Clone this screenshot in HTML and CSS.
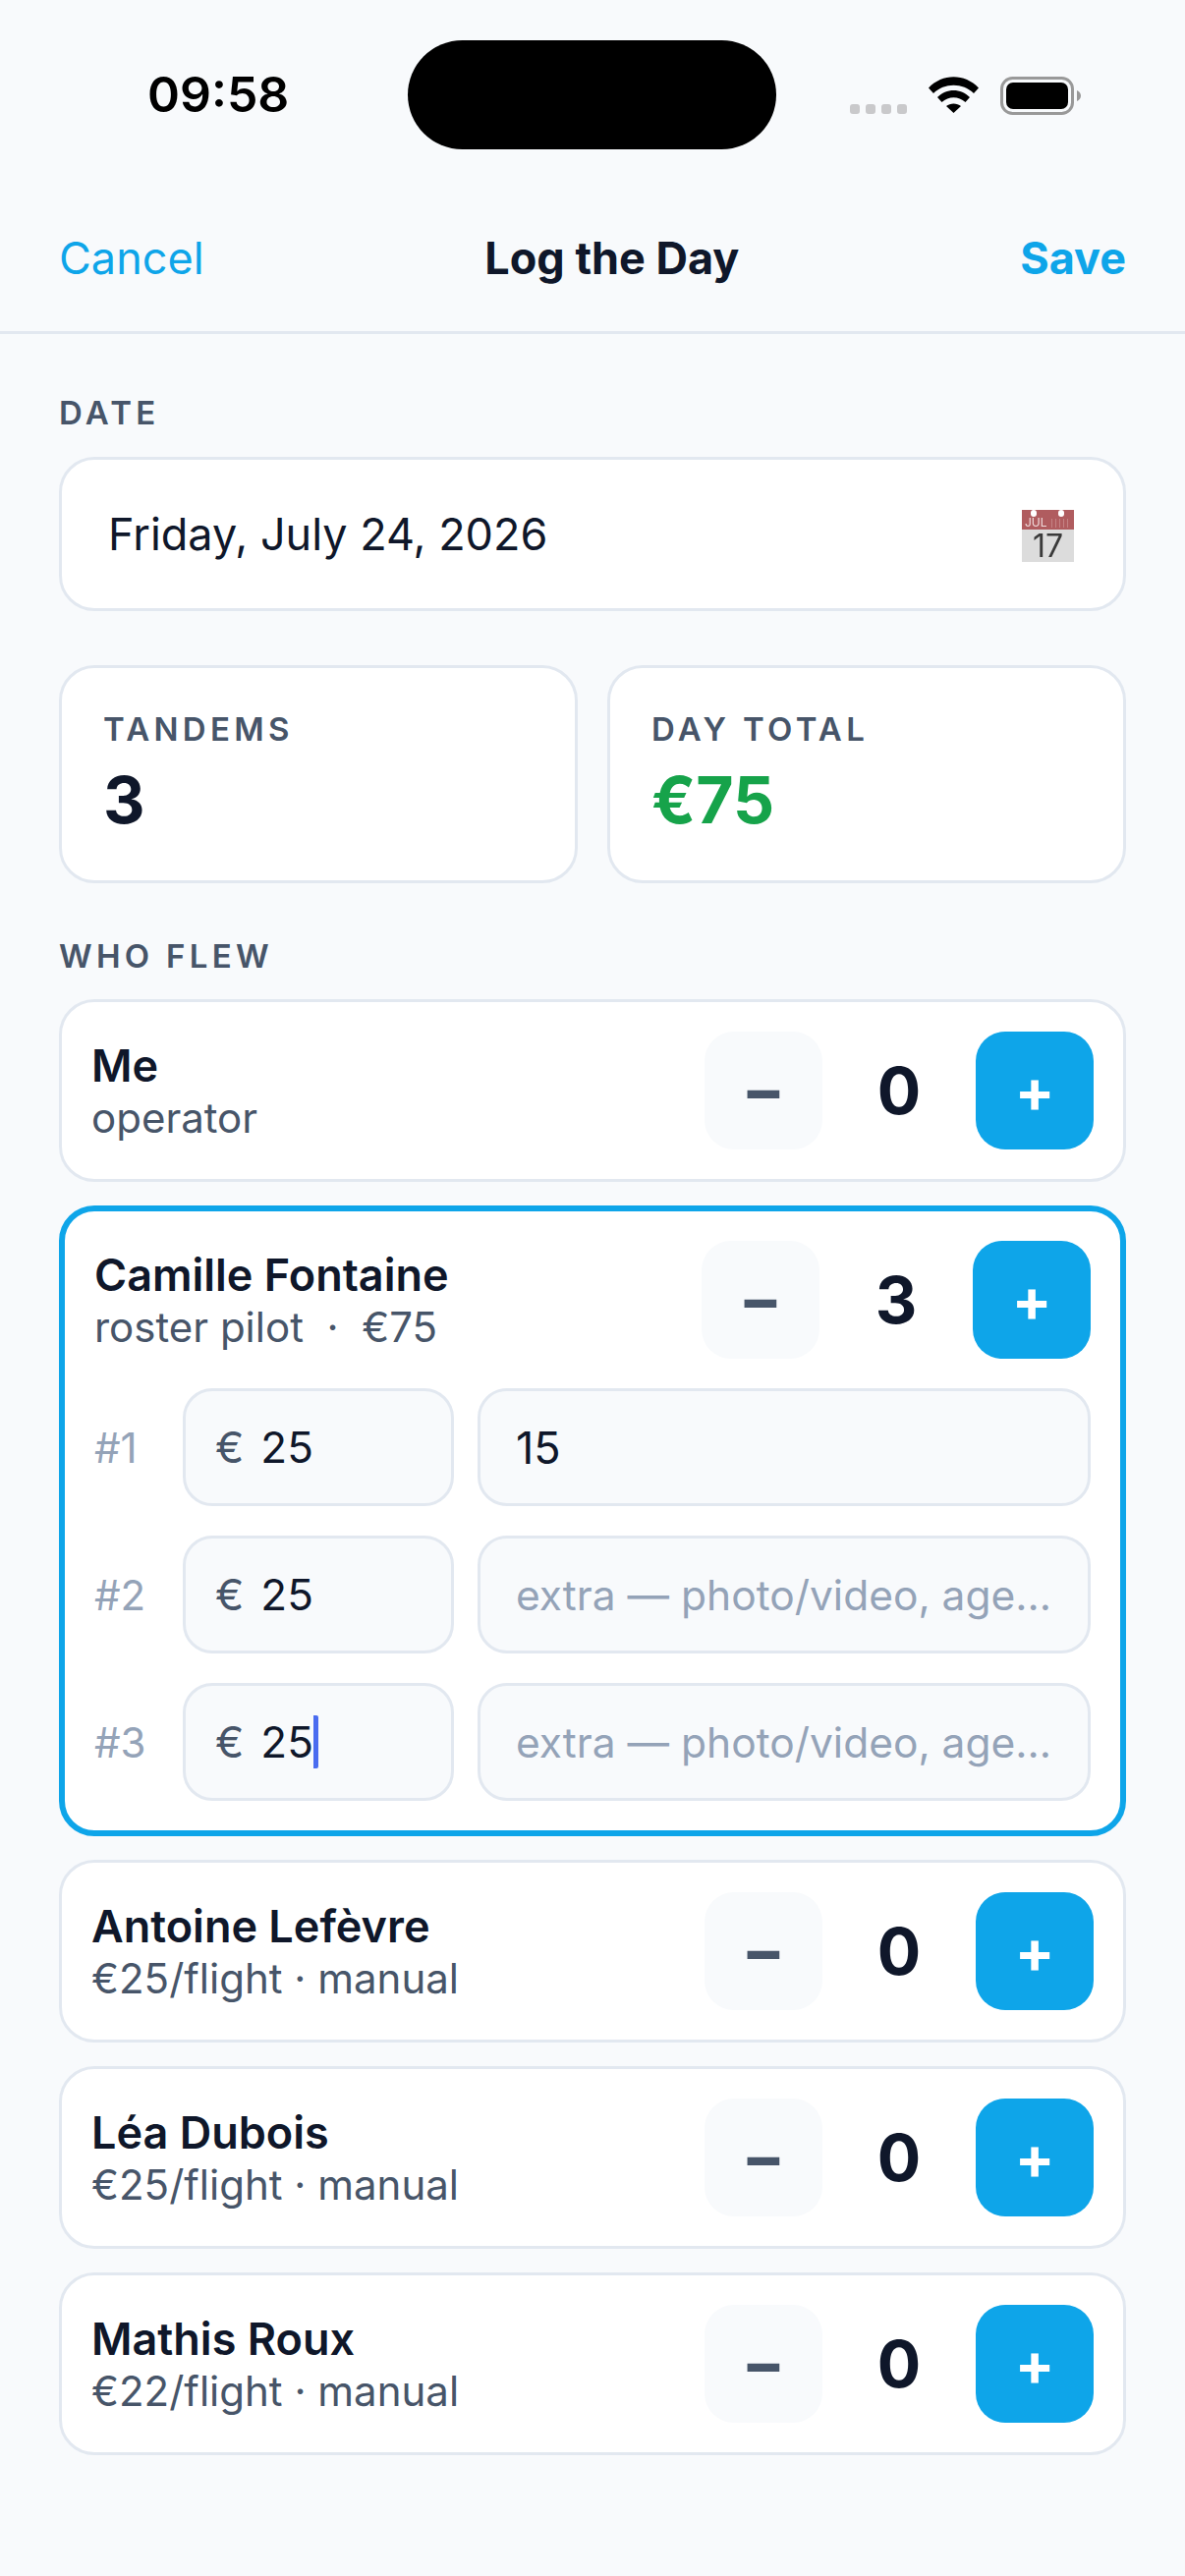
FILE: index.html
```html
<!DOCTYPE html>
<html lang="en">
<head>
    <title>Log the Day</title>
    <link rel="stylesheet" href="styles.css">
</head>
<body>
    <div class="status-bar">
        <div class="status-time">09:58</div>
        <div class="island"></div>
        <div class="status-icons">
            <div class="signal"><span></span><span></span><span></span><span></span></div>
            <svg class="wifi" width="51" height="37" viewBox="0 0 51 37">
                <path d="M0 11.5C14 -3.5 37 -3.5 51 11.5L46 17C35 6 16 6 5 17Z"/>
                <path d="M9 21C18 11.5 33 11.5 42 21L37.5 26C30.500 19.500 20.500 19.500 13.500 26Z"/>
                <path d="M18 30C22 26.500 29 26.500 33 30L25.500 37Z"/>
            </svg>
            <svg class="battery" width="82" height="39" viewBox="0 0 82 39">
                <rect x="1.500" y="1.500" width="72" height="36" rx="11" fill="none" stroke="#999" stroke-width="3"/>
                <rect x="6" y="6" width="63" height="27" rx="7"/>
                <path d="M78 14C80.500 15 82 17 82 19.500C82 22 80.500 24 78 25Z" fill="#999"/>
            </svg>
        </div>
    </div>

    <div class="nav">
        <div class="nav-cancel">Cancel</div>
        <div class="nav-title">Log the Day</div>
        <div class="nav-save">Save</div>
    </div>

    <div class="content">
        <div class="section-label date-label">DATE</div>
        <div class="date-field">
            <div>Friday, July 24, 2026</div>
            <div class="cal">
                <div class="cal-top"><span>JUL</span><i class="cal-lines"></i></div>
                <div class="cal-day">17</div>
            </div>
        </div>

        <div class="stats">
            <div class="stat">
                <div class="section-label">TANDEMS</div>
                <div class="stat-value">3</div>
            </div>
            <div class="stat">
                <div class="section-label">DAY TOTAL</div>
                <div class="stat-value green">€75</div>
            </div>
        </div>

        <div class="section-label who-label">WHO FLEW</div>
        <div class="pilots">
            <div class="pilot">
                <div class="pilot-top">
                    <div class="pilot-info">
                        <div class="pilot-name">Me</div>
                        <div class="pilot-sub">operator</div>
                    </div>
                    <div class="stepper">
                        <div class="btn-minus">−</div>
                        <div class="count">0</div>
                        <div class="btn-plus">+</div>
                    </div>
                </div>
            </div>

            <div class="pilot active">
                <div class="pilot-top">
                    <div class="pilot-info">
                        <div class="pilot-name">Camille Fontaine</div>
                        <div class="pilot-sub">roster pilot &nbsp;·&nbsp; €75</div>
                    </div>
                    <div class="stepper">
                        <div class="btn-minus">−</div>
                        <div class="count">3</div>
                        <div class="btn-plus">+</div>
                    </div>
                </div>
                <div class="flight-row">
                    <div class="flight-num">#1</div>
                    <div class="field amount"><span class="euro">€</span><span>25</span></div>
                    <div class="field extra">15</div>
                </div>
                <div class="flight-row">
                    <div class="flight-num">#2</div>
                    <div class="field amount"><span class="euro">€</span><span>25</span></div>
                    <div class="field extra placeholder">extra — photo/video, age...</div>
                </div>
                <div class="flight-row">
                    <div class="flight-num">#3</div>
                    <div class="field amount"><span class="euro">€</span><span class="caret">25</span></div>
                    <div class="field extra placeholder">extra — photo/video, age...</div>
                </div>
            </div>

            <div class="pilot">
                <div class="pilot-top">
                    <div class="pilot-info">
                        <div class="pilot-name">Antoine Lefèvre</div>
                        <div class="pilot-sub">€25/flight · manual</div>
                    </div>
                    <div class="stepper">
                        <div class="btn-minus">−</div>
                        <div class="count">0</div>
                        <div class="btn-plus">+</div>
                    </div>
                </div>
            </div>

            <div class="pilot">
                <div class="pilot-top">
                    <div class="pilot-info">
                        <div class="pilot-name">Léa Dubois</div>
                        <div class="pilot-sub">€25/flight · manual</div>
                    </div>
                    <div class="stepper">
                        <div class="btn-minus">−</div>
                        <div class="count">0</div>
                        <div class="btn-plus">+</div>
                    </div>
                </div>
            </div>

            <div class="pilot">
                <div class="pilot-top">
                    <div class="pilot-info">
                        <div class="pilot-name">Mathis Roux</div>
                        <div class="pilot-sub">€22/flight · manual</div>
                    </div>
                    <div class="stepper">
                        <div class="btn-minus">−</div>
                        <div class="count">0</div>
                        <div class="btn-plus">+</div>
                    </div>
                </div>
            </div>
        </div>
    </div>
</body>
</html>
```

FILE: styles.css
```css
* {
    box-sizing: border-box;
}

html, body {
    margin: 0;
    background-color: #f8fafc;
}

body {
    font-family: Inter, "Liberation Sans", sans-serif;
    color: #0f172a;
    min-height: 2622px;
}

/* status bar */
.status-bar {
    display: flex;
    height: 152px;
    padding-top: 41px;
}

.status-time {
    width: 415px;
    padding-left: 150px;
    font-size: 50px;
    font-weight: 600;
    line-height: 111px;
    color: #000;
}

.island {
    width: 375px;
    height: 111px;
    background-color: #000;
    border-radius: 56px;
}

.status-icons {
    display: flex;
    align-items: flex-start;
    padding: 37px 0 0 75px;
}

.signal {
    display: flex;
    gap: 6px;
    margin-top: 28px;
    margin-right: 22px;
}

.signal span {
    width: 10px;
    height: 10px;
    border-radius: 3px;
    background-color: #c9c9cb;
}

.wifi {
    margin-right: 22px;
}

/* nav */
.nav {
    display: flex;
    justify-content: space-between;
    align-items: center;
    height: 188px;
    padding: 36px 60px 0;
    border-bottom: 3px solid #e2e8f0;
    font-size: 45px;
}

.nav-cancel {
    color: #0ea5e9;
}

.nav-title {
    font-weight: 700;
}

.nav-save {
    color: #0ea5e9;
    font-weight: 700;
}

.content {
    padding: 0 60px;
}

.section-label {
    font-size: 33px;
    font-weight: 600;
    letter-spacing: 0.13em;
    color: #475569;
    line-height: 40px;
}

.date-label {
    margin-top: 60px;
    margin-bottom: 25px;
}

.date-field {
    display: flex;
    justify-content: space-between;
    align-items: center;
    height: 157px;
    padding: 0 50px 0 47px;
    background-color: #fff;
    border: 3px solid #e2e8f0;
    border-radius: 36px;
    font-size: 45px;
}

/* calendar emoji */
.cal {
    position: relative;
    width: 53px;
    height: 53px;
    margin-top: 3px;
    background-color: #dcdcdc;
    filter: blur(0.4px);
}

.cal::before, .cal::after {
    content: "";
    position: absolute;
    top: 0;
    width: 6px;
    height: 7px;
    border-radius: 3px;
    background-color: #fff;
}

.cal::before {
    left: 9px;
}

.cal::after {
    left: 37px;
}

.cal-top {
    display: flex;
    justify-content: space-between;
    align-items: flex-end;
    height: 20px;
    padding: 0 3px 1px;
    background-color: #b05c5f;
    font-size: 12px;
    line-height: 12px;
    color: #f0dcdc;
}

.cal-lines {
    width: 20px;
    height: 9px;
    margin-bottom: 1px;
    background: repeating-linear-gradient(90deg, #d9a9aa 0 1px, transparent 1px 4px);
    opacity: 0.5;
}

.cal-day {
    height: 33px;
    font-size: 32px;
    line-height: 33px;
    text-align: center;
    color: #3a3a3a;
}

.stats {
    display: flex;
    gap: 30px;
    margin-top: 55px;
}

.stat {
    flex: 1;
    height: 222px;
    padding: 42px 42px 0;
    background-color: #fff;
    border: 3px solid #e2e8f0;
    border-radius: 36px;
}

.stat-value {
    font-size: 66px;
    font-weight: 700;
    line-height: 80px;
    margin-top: 12px;
}

.green {
    color: #16a34a;
}

.who-label {
    margin-top: 54px;
    margin-bottom: 24px;
}

.pilots {
    display: flex;
    flex-direction: column;
    gap: 24px;
}

.pilot {
    padding: 30px;
    background-color: #fff;
    border: 3px solid #e2e8f0;
    border-radius: 36px;
}

.pilot.active {
    border: 6px solid #0ea5e9;
}

.pilot-top {
    display: flex;
    justify-content: space-between;
    align-items: center;
}

.pilot-info {
    padding-top: 2px;
}

.pilot-name {
    font-size: 45px;
    font-weight: 600;
    line-height: 54px;
}

.pilot-sub {
    font-size: 42px;
    color: #475569;
    line-height: 52px;
}

.stepper {
    display: flex;
    align-items: center;
    gap: 36px;
}

.btn-minus, .btn-plus {
    display: flex;
    justify-content: center;
    align-items: center;
    width: 120px;
    height: 120px;
    border-radius: 30px;
    font-size: 60px;
    font-weight: 700;
}

.btn-minus {
    background-color: #f8fafc;
    color: #475569;
    font-size: 66px;
    padding-bottom: 3px;
}

.btn-plus {
    background-color: #0ea5e9;
    color: #fff;
}

.count {
    width: 84px;
    text-align: center;
    font-size: 66px;
    font-weight: 700;
}

.flight-row {
    display: flex;
    align-items: center;
    gap: 24px;
    margin-top: 30px;
}

.flight-num {
    width: 66px;
    font-size: 42px;
    color: #94a3b8;
}

.field {
    display: flex;
    align-items: center;
    height: 120px;
    background-color: #f8fafc;
    border: 3px solid #e2e8f0;
    border-radius: 30px;
    font-size: 45px;
}

.amount {
    width: 276px;
    padding: 0 30px;
    gap: 17px;
    font-size: 44px;
}

.euro {
    color: #475569;
}

.caret {
    border-right: 5px solid #4a6cf0;
    line-height: 54px;
    border-radius: 2px;
}

.extra {
    flex: 1;
    min-width: 0;
    padding: 0 36px;
    white-space: nowrap;
    overflow: hidden;
}

.placeholder {
    color: #94a3b8;
    font-size: 42.5px;
}
```
